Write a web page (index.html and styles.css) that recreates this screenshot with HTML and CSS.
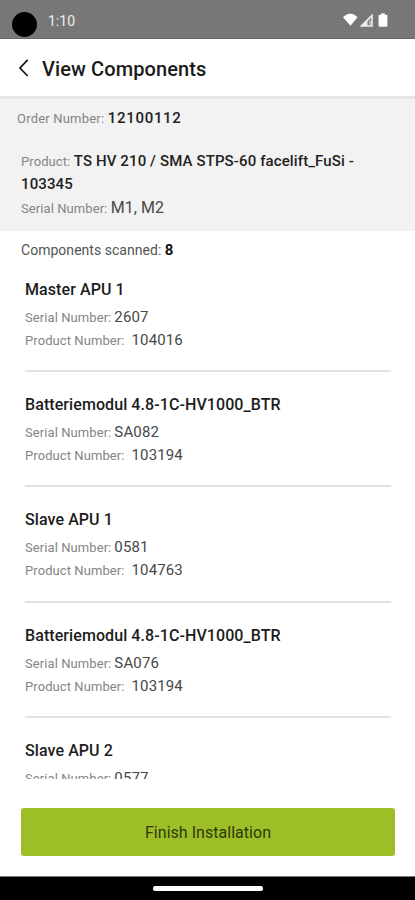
FILE: index.html
```html
<!DOCTYPE html>
<html lang="en">
<head>
<meta charset="utf-8">
<title>View Components</title>
<link rel="stylesheet" href="styles.css">
</head>
<body>
<div class="screen">
  <div class="status">
    <span class="camera"></span>
    <span class="clock">1:10</span>
    <svg class="indicators" width="48" height="16" viewBox="0 0 48 16">
      <path fill="#fff" d="M1 5.200Q8.300 -2 15.600 5.200L8.500 13.800z"/>
      <path fill="#eee" fill-rule="evenodd" d="M17.500 14.700L30.800 1.500V14.700zM25.500 13.300H29.200V5.500L25.500 9.300z"/>
      <path fill="#bbb" d="M27 13.300V8.500h2.200v4.800z"/>
      <path fill="#fff" d="M39.200 1.300h3.600v1.400h1.600q1 0 1 1v10q0 1-1 1h-6.800q-1 0-1-1v-10q0-1 1-1h1.600z"/>
    </svg>
  </div>
  <header class="header">
    <svg class="back" width="12" height="20" viewBox="0 0 12 20"><path d="M9.700 1.800L2 10L9.700 18" fill="none" stroke="#111" stroke-width="1.700"/></svg>
    <h1>View Components</h1>
  </header>
  <section class="order">
    <p class="number"><span class="label">Order Number:</span> <b class="num">12100112</b></p>
    <p class="product"><span class="label">Product:</span> <b class="name">TS HV 210 / SMA STPS-60 facelift_FuSi -<br>103345</b></p>
    <p class="serials"><span class="label">Serial Number:</span> <span class="value">M1, M2</span></p>
  </section>
  <p class="scanned">Components scanned: <b>8</b></p>
  <main class="list">
    <article class="item"><h2>Master APU 1</h2>
      <p><span class="label">Serial Number:</span><span class="value">2607</span></p>
      <p><span class="label wide">Product Number:</span><span class="value">104016</span></p></article>
    <article class="item"><h2>Batteriemodul 4.8-1C-HV1000_BTR</h2>
      <p><span class="label">Serial Number:</span><span class="value">SA082</span></p>
      <p><span class="label wide">Product Number:</span><span class="value">103194</span></p></article>
    <article class="item"><h2>Slave APU 1</h2>
      <p><span class="label">Serial Number:</span><span class="value">0581</span></p>
      <p><span class="label wide">Product Number:</span><span class="value">104763</span></p></article>
    <article class="item"><h2>Batteriemodul 4.8-1C-HV1000_BTR</h2>
      <p><span class="label">Serial Number:</span><span class="value">SA076</span></p>
      <p><span class="label wide">Product Number:</span><span class="value">103194</span></p></article>
    <article class="item"><h2>Slave APU 2</h2>
      <p><span class="label">Serial Number:</span><span class="value">0577</span></p></article>
  </main>
  <button class="finish">Finish Installation</button>
  <footer class="nav"><span class="pill"></span></footer>
</div>
</body>
</html>
```
FILE: styles.css
```css
* { box-sizing: border-box; }
body, h1, h2, p { margin: 0; }
body { background: #fff; font-family: Roboto, sans-serif; color: #1c1c1c; }
.screen { height: 900px; display: flex; flex-direction: column; overflow: hidden; }
.status { flex: none; height: 39px; background: #777; border-bottom: 1px solid #686868; display: flex; align-items: flex-start; padding: 12px 25px 0 12px; }
.camera { width: 25px; height: 25px; border-radius: 50%; background: #000; }
.clock { margin-left: 11px; font-size: 14px; line-height: 18px; color: #eee; }
.indicators { margin-left: auto; }
.header { flex: none; height: 57px; display: flex; align-items: center; padding: 3px 0 0 18px; }
.back { margin-top: -3px; }
h1 { margin-left: 12px; font-size: 20px; font-weight: 500; line-height: 26px; letter-spacing: 0.100px; color: #1a1a1a; }
.order { flex: none; height: 135px; background: #f2f2f2; border-top: 3px solid #e6e6e6; padding: 8px 16px 0 21px; }
.order p, .item p { font-size: 14px; line-height: 23px; white-space: nowrap; }
.order p > *, .item p > * { line-height: 1; }
.order .number { margin-left: -4px; }
.order .product { margin-top: 20px; }
.order .serials { margin-top: 1px; }
.label { font-size: 13px; color: #858585; letter-spacing: 0.080px; }
.order .number .label { letter-spacing: 0.200px; }
.order b { font-size: 15px; font-weight: 500; color: #222; }
.order .num { letter-spacing: 0.700px; }
.order .name { letter-spacing: 0.120px; }
.value { font-size: 15px; letter-spacing: 0.150px; color: #484848; }
.order .value { font-size: 16px; letter-spacing: 0; }
.scanned { flex: none; margin: 9px 0 0 21px; font-size: 14px; line-height: 20px; letter-spacing: 0.030px; color: #555; }
.scanned b { font-size: 15px; line-height: 1; color: #111; }
.list { flex: none; height: 519px; overflow: hidden; padding: 0 24px 0 25px; }
.item { height: 115.300px; padding-top: 19px; }
.item:first-child { height: 110px; }
.item + .item { border-top: 2px solid #e2e2e2; padding-top: 22px; }
h2 { font-size: 16px; font-weight: 500; line-height: 22px; letter-spacing: 0.080px; margin-bottom: 5px; }
.item .label { margin-right: 3px; }
.item .label.wide { margin-right: 7px; }
.finish { flex: none; width: 374px; height: 48px; margin: 29px 0 0 21px; padding: 2px 0 0; border: 0; border-radius: 3px; background: #9dbe26; font: 400 16px/46px Roboto, sans-serif; letter-spacing: 0.030px; color: #2d3a0c; }
.nav { flex: none; height: 24px; margin-top: auto; background: #000; border-top: 1px solid #777; display: flex; justify-content: center; padding-top: 9px; }
.pill { width: 110px; height: 5px; border-radius: 2px; background: #fff; }
```
